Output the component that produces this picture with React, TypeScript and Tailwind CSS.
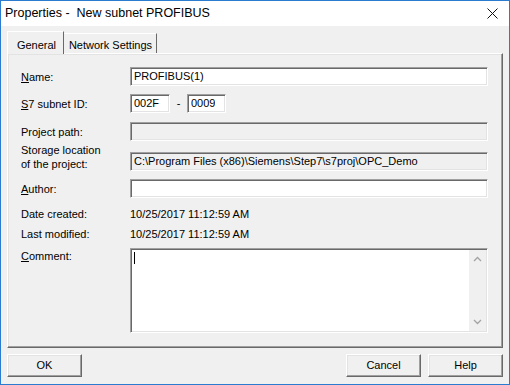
import * as React from "react";

// Sunken edit box look (classic Win32)
const sunken =
  "border border-t-[#a0a0a0] border-l-[#a0a0a0] border-b-white border-r-white shadow-[inset_1px_1px_0_#696969,inset_-1px_-1px_0_#e3e3e3]";

const raised =
  "border border-t-white border-l-white border-b-[#696969] border-r-[#696969] shadow-[inset_-1px_-1px_0_#a0a0a0,inset_1px_1px_0_#e3e3e3]";

function Label({ children }: { children: React.ReactNode }) {
  return <div className="w-[109px] shrink-0 leading-[14px]">{children}</div>;
}

function Field({
  value,
  disabled,
  className = "",
}: {
  value?: string;
  disabled?: boolean;
  className?: string;
}) {
  return (
    <div
      className={`flex h-[19px] items-center px-[3px] ${sunken} ${
        disabled ? "bg-[#f0f0f0]" : "bg-white"
      } ${className}`}
    >
      <span className="truncate">{value}</span>
    </div>
  );
}

function Button({ children }: { children: React.ReactNode }) {
  return (
    <div
      className={`flex h-[23px] w-[75px] items-center justify-center bg-[#f0f0f0] ${raised}`}
    >
      {children}
    </div>
  );
}

function Chevron({ up }: { up?: boolean }) {
  return (
    <svg width="9" height="6" viewBox="0 0 9 6">
      <path
        d={up ? "M1 5 L4.5 1.5 L8 5" : "M1 1 L4.5 4.5 L8 1"}
        fill="none"
        stroke="#a3a3a3"
        strokeWidth="1.3"
      />
    </svg>
  );
}

export default function App() {
  return (
    <div className="flex h-[385px] w-[510px] flex-col border border-[#2b7bd1] bg-[#f0f0f0] font-['Liberation_Sans',Arial,sans-serif] text-[11px] text-black">
      {/* Title bar */}
      <div className="flex h-[25px] shrink-0 items-center justify-between bg-white pl-[4px] pr-[11px]">
        <span className="text-[12.5px]">Properties -&nbsp; New subnet PROFIBUS</span>
        <svg width="11" height="11" viewBox="0 0 11 11">
          <path d="M0.5 0.5 L10.5 10.5 M10.5 0.5 L0.5 10.5" stroke="#111" strokeWidth="1" />
        </svg>
      </div>

      <div className="flex flex-1 flex-col px-[6px] pt-[4px]">
        {/* Tabs */}
        <div className="relative z-10 flex h-[23px] items-end">
          <div className="-mb-px flex h-[23px] w-[57px] items-start justify-center border border-b-0 border-t-white border-l-white border-r-[#696969] bg-[#f0f0f0] pt-[5px] pl-[2px]">
            General
          </div>
          <div className="flex h-[20px] w-[93px] items-start justify-center border border-b-0 border-t-white border-l-[#f0f0f0] border-r-[#696969] pt-[3px]">
            Network Settings
          </div>
        </div>

        {/* Panel */}
        <div
          className={`flex h-[295px] flex-col pl-[13px] pr-[14px] pt-[13px] ${raised}`}
        >
          <div className="flex items-center">
            <Label>
              <span className="underline">N</span>ame:
            </Label>
            <Field value="PROFIBUS(1)" className="flex-1" />
          </div>

          <div className="mt-[8px] flex items-center">
            <Label>
              <span className="underline">S</span>7 subnet ID:
            </Label>
            <Field value="002F" className="w-[40px]" />
            <span className="w-[17px] text-center">-</span>
            <Field value="0009" className="w-[39px]" />
          </div>

          <div className="mt-[9px] flex items-center">
            <Label>Project path:</Label>
            <Field disabled className="flex-1" />
          </div>

          <div className="mt-[2px] flex items-end">
            <Label>
              Storage location
              <br />
              of the project:
            </Label>
            <Field
              disabled
              value="C:\Program Files (x86)\Siemens\Step7\s7proj\OPC_Demo"
              className="flex-1"
            />
          </div>

          <div className="mt-[8px] flex items-center">
            <Label>
              <span className="underline">A</span>uthor:
            </Label>
            <Field className="flex-1" />
          </div>

          <div className="mt-[8px] flex h-[16px] items-center">
            <Label>Date created:</Label>
            <span>10/25/2017 11:12:59 AM</span>
          </div>

          <div className="mt-[4px] flex h-[16px] items-center">
            <Label>Last modified:</Label>
            <span>10/25/2017 11:12:59 AM</span>
          </div>

          <div className="mt-[6px] flex items-start">
            <div className="pt-[1px]">
              <Label>
                <span className="underline">C</span>omment:
              </Label>
            </div>
            <div className={`flex h-[85px] flex-1 bg-white ${sunken}`}>
              <div className="flex-1 pl-[3px] pt-[3px]">
                <div className="h-[12px] w-px bg-black" />
              </div>
              <div className="my-px mr-px flex w-[17px] flex-col items-center justify-between bg-[#f0f0f0] py-[6px]">
                <Chevron up />
                <Chevron />
              </div>
            </div>
          </div>
        </div>

        {/* Buttons */}
        <div className="mt-[6px] flex items-center justify-between">
          <Button>OK</Button>
          <div className="flex gap-[7px]">
            <Button>Cancel</Button>
            <Button>Help</Button>
          </div>
        </div>
      </div>
    </div>
  );
}
